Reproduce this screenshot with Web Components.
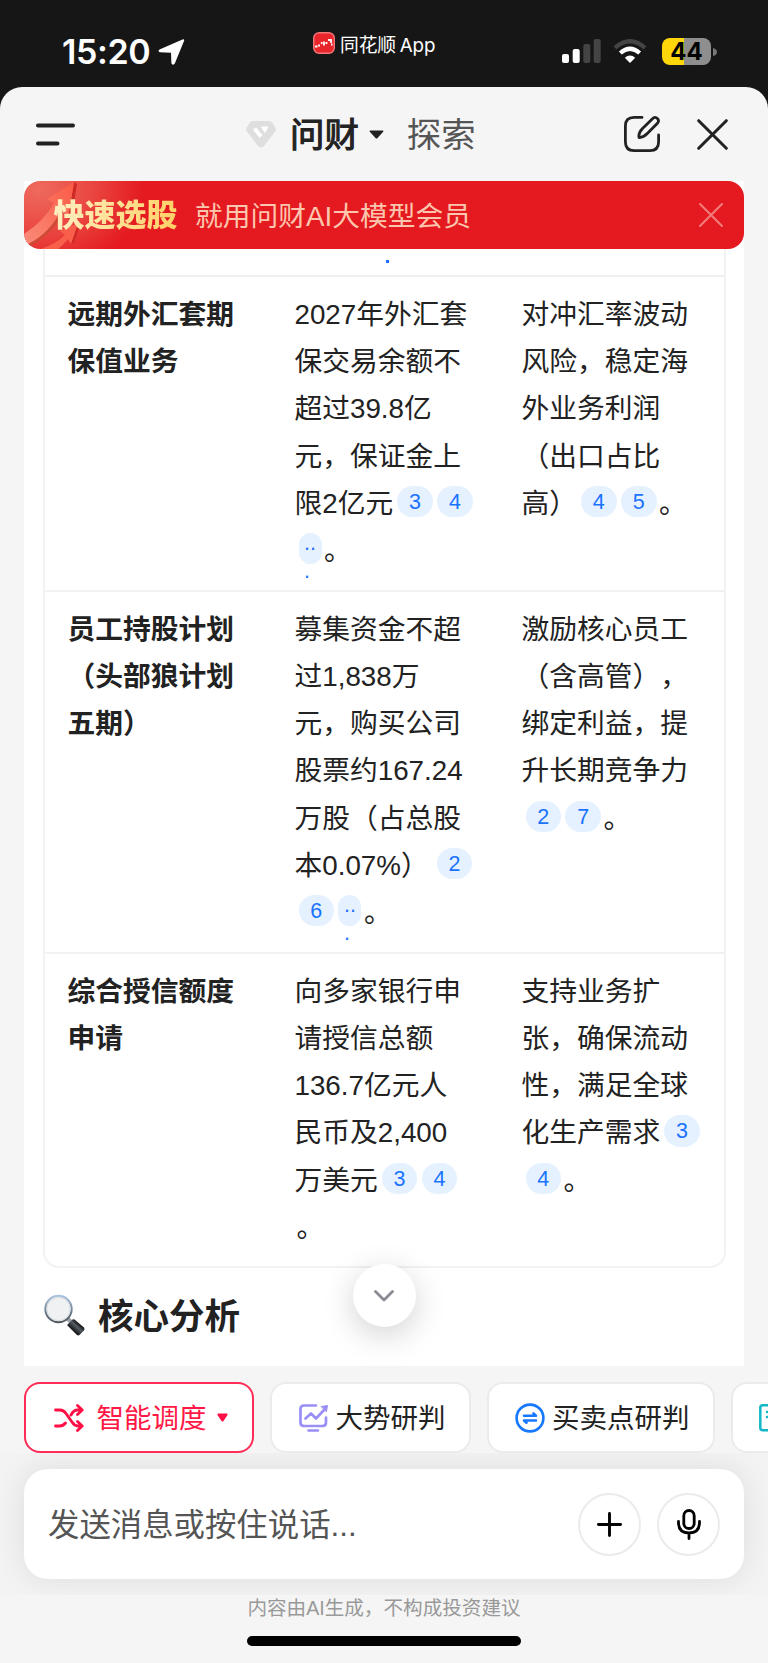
<!DOCTYPE html>
<html lang="zh-CN">
<head>
<meta charset="utf-8">
<meta name="viewport" content="width=device-width">
<title>问财</title>
<style>
    html, body{
        margin: 0;
        padding: 0;
    }
    body{
        width: 768px;
        height: 1663px;
        overflow: hidden;
        background: #161616;
        color: #222;
        font-family: "Liberation Sans", "Noto Sans CJK SC", sans-serif;
        text-spacing-trim: space-all;
    }
</style>
</head>
<body>
<ask-app></ask-app>

<script>
// every component only has to give its markup
class BaseElement extends HTMLElement {
    connectedCallback() {
        if (this.shadowRoot) return
        const tpl = document.createElement('template')
        tpl.innerHTML = `<style>*{ box-sizing: border-box; } svg{ display: block; flex: none; }</style>` + this.render()
        this.attachShadow({ mode: 'open' }).appendChild(tpl.content.cloneNode(true))
    }
}

class StatusBar extends BaseElement {
    render() {
        return `
        <style>
            :host{
                display: flex;
                height: 87px;
                padding: 0 51px 0 62px;
                background: #161616;
                color: #fff;
            }
            .left, .right{ display: flex; align-items: center; height: 103px; width: 251px; }
            .right{ justify-content: flex-end; width: auto; margin-left: auto; }
            .time{ font: 600 34px/40px Inter, sans-serif; letter-spacing: -0.4px; margin-right: 8px; }
            .app{ display: flex; align-items: center; height: 86px; gap: 5px; font-size: 18.8px; white-space: nowrap; }
            .app svg{ margin-top: -1px; }
            .app span{ font-family: Inter, "Noto Sans CJK SC", sans-serif; word-spacing: -1.500px; letter-spacing: -.1px; }
            .battery{
                width: 49px; height: 27px; margin-left: 15px; border-radius: 8px;
                background: linear-gradient(90deg, #ffd60a 44%, #8e8e8e 44%);
                color: #000; text-align: center;
                font: 700 24px/27px Inter, sans-serif;
            }
        </style>
        <div class="left">
            <span class="time">15:20</span>
            <svg width="28" height="28" viewBox="0 0 28 28"><path d="M24.500 1.500Q26.800 .8 26 3L16.800 25.500Q14.600 28 13.400 25.200L13 14.800 2 14.200Q-.6 13.300 1.500 11.400Z" fill="#fff"/></svg>
        </div>
        <div class="app">
            <svg width="22" height="22" viewBox="0 0 22 22">
                <rect x=".7" y=".7" width="20.600" height="20.600" rx="5.500" fill="#e8252b" stroke="#f2777a" stroke-width="1.400"/>
                <path d="M2 14.500h2.500M6 12.500v2M8 10.500l1.500 1M11 9.500v4M13.500 10v2M15 8h3v3M18 12.500h1.500" stroke="#fff" stroke-width="1.800" fill="none"/>
            </svg>
            <span>同花顺 App</span>
        </div>
        <div class="right">
            <svg width="39" height="25" viewBox="0 0 39 25">
                <rect x="0" y="15" width="7" height="9" rx="2" fill="#fff"/><rect x="10.700" y="10" width="7" height="14" rx="2" fill="#fff"/>
                <rect x="21.300" y="5" width="7" height="19" rx="2" fill="#444"/><rect x="31.700" y="0" width="7" height="24" rx="2" fill="#444"/>
            </svg>
            <svg width="34" height="25" viewBox="0 0 34 25" style="margin-left:12px" fill="none" stroke-width="4.200">
                <path d="M2 8.800Q17-4.200 32 8.800" stroke="#444"/>
                <path d="M7.300 14Q17 5.600 26.700 14" stroke="#fff"/>
                <path d="M11.800 18.700Q17 14.300 22.200 18.700L17 24Z" fill="#fff"/>
            </svg>
            <div class="battery">44</div>
            <svg width="4" height="8" viewBox="0 0 4 8" style="margin-left:2px"><path d="M0 0Q4 1 4 4T0 8Z" fill="#777"/></svg>
        </div>
        `
    }
}
customElements.define('status-bar', StatusBar)

class AppHeader extends BaseElement {
    render() {
        return `
        <style>
            :host{
                display: flex;
                align-items: center;
                height: 94px;
                padding: 0 40px 0 36px;
            }
            .tabs{ display: flex; align-items: center; margin-left: 171px; }
            .tab{ font-size: 34.4px; line-height: 50px; padding-top: 1px; }
            .on{ -webkit-text-stroke: 1.100px #222; margin-left: 14px; }
            .off{ color: #555; margin-left: 23px; }
            .end{ margin-left: auto; display: flex; align-items: center; gap: 37px; }
        </style>
        <svg width="39" height="23" viewBox="0 0 39 23"><path d="M2 2.500h35M2 20.500h19.500" stroke="#222" stroke-width="4" stroke-linecap="round"/></svg>
        <div class="tabs">
            <svg width="30" height="27" viewBox="0 0 30 27">
                <path d="M7 0H23Q25 0 26.200 1.600L29.300 6.500Q30.500 8.500 29 10.500L18 25Q15 28 12 25L1 10.500Q-.5 8.500 .7 6.500L3.800 1.600Q5 0 7 0Z" fill="#dedede"/>
                <path d="M8.500 7.500L15 15.500" stroke="#fff" stroke-width="4"/>
                <path d="M15.500 6h6.500l-3.200 5.500Z" fill="#fff" stroke="#fff" stroke-linejoin="round"/>
            </svg>
            <span class="tab on">问财</span>
            <svg width="15" height="9" viewBox="0 0 15 9" style="margin-left:10px"><path d="M1 .5H14Q15 1 14 2L8.500 8Q7.500 9 6.500 8L1 2Q0 1 1 .5Z" fill="#222"/></svg>
            <span class="tab off">探索</span>
        </div>
        <div class="end">
            <svg width="36" height="36" viewBox="0 0 36 36" fill="none" stroke="#222" stroke-width="2.800" stroke-linecap="round" stroke-linejoin="round">
                <path d="M18 1.400H10Q1.400 1.400 1.400 10V26Q1.400 34.600 10 34.600H26Q34.600 34.600 34.600 26V19"/>
                <path d="M15 21.500Q14.200 17 18.500 12.500L28.500 2.800Q31 .2 33.400 2.600T33.200 7.600L23.300 17.600Q19 21.900 15 21.500Z"/>
            </svg>
            <svg width="31" height="31" viewBox="0 0 31 31"><path d="M1.700 1.700L29.300 29.300M29.300 1.700L1.700 29.300" stroke="#222" stroke-width="3" stroke-linecap="round"/></svg>
        </div>
        `
    }
}
customElements.define('app-header', AppHeader)

class PromoBanner extends BaseElement {
    render() {
        return `
        <style>
            :host{
                display: flex;
                align-items: center;
                position: relative;
                flex: none;
                height: 67.500px;
                padding: 0 21px 0 29.500px;
                border-radius: 16px;
                overflow: hidden;
                background: radial-gradient(ellipse 105px 85px at 15px 8px, #ee6a5d, #ea4741 50%, #e41a20 100%);
            }
            .art{ position: absolute; left: 0; top: 0; }
            .title{
                position: relative;
                top: 1px;
                font-size: 31px;
                font-weight: 900;
                line-height: 48px;
                background: linear-gradient(100deg, #fff0c4, #ffcf63);
                -webkit-background-clip: text;
                color: transparent;
            }
            .text{ margin-left: 17.500px; padding-bottom: 2px; font-size: 27.750px; color: #fcc6ae; }
            .close{ margin-left: auto; }
        </style>
        <svg class="art" width="90" height="68" viewBox="0 0 90 68">
            <defs><linearGradient id="g" x1="0" y1="1" x2="1" y2="0"><stop offset="0" stop-color="#f98b79"/><stop offset="1" stop-color="#fb5b46"/></linearGradient></defs>
            <path d="M50 1L53 3 47 41 44 37Z" fill="#cf2a24"/>
            <path d="M4 63Q25 53 38 28L39.500 31Q28 54 6 65Z" fill="#cd4a35"/>
            <path d="M0 53Q20 40 30 22L23 18 50 1 44 37 38 28Q25 53 4 63L0 60Z" fill="url(#g)"/>
            <path d="M54 42L56 44 50 62 47 63Z" fill="#cf2a24"/>
            <path d="M17 68Q32 63 41 54L36 50 54 42 47 63 44 58Q39 64 34 68Z" fill="#f9604c"/>
        </svg>
        <span class="title">快速选股</span>
        <span class="text">就用问财AI大模型会员</span>
        <svg class="close" width="24" height="24" viewBox="0 0 24 24"><path d="M1 1L23 23M23 1L1 23" stroke="#f27d7d" stroke-width="2" stroke-linecap="round"/></svg>
        `
    }
}
customElements.define('promo-banner', PromoBanner)

// citation pill, "more" makes the narrow one whose last dot wraps under it
class RefBadge extends BaseElement {
    render() {
        const more = this.hasAttribute('more')
        return `
        <style>
            :host{
                display: inline-flex;
                justify-content: center;
                vertical-align: top;
                width: ${more ? 23 : 35.6}px;
                height: 31.4px;
                margin: 6px .4px 0 4px;
                border-radius: 16px;
                background: #e6f1ff;
                color: #1a73ff;
                font-size: 21.5px;
                line-height: 33px;
                font-weight: 400;
            }
            .dots{ width: 12px; margin-top: -4px; line-height: 28px; }
        </style>
        ${more ? '<span class="dots">..<br>.</span>' : '<slot></slot>'}
        `
    }
}
customElements.define('ref-badge', RefBadge)

class TableRow extends BaseElement {
    render() {
        return `
        <style>
            :host{
                display: grid;
                grid-template-columns: 227px 227px 227px;
                padding: 14px 0 15.700px;
                border-bottom: 2px solid #f2f2f2;
                font-size: 27.750px;
                line-height: 47.200px;
            }
            :host(:last-of-type){ border-bottom: none; }
            div{ padding-left: 22.500px; }
            .name{ font-weight: 700; }
            ::slotted(p){ margin: 0; height: 47.200px; white-space: nowrap; }
        </style>
        <div class="name"><slot name="name"></slot></div>
        <div><slot name="plan"></slot></div>
        <div><slot name="effect"></slot></div>
        `
    }
}
customElements.define('table-row', TableRow)

class AnswerTable extends BaseElement {
    render() {
        return `
        <style>
            :host{
                display: block;
                flex: none;
                height: 1019px;
                margin: 0 18px 0 19px;
                border: 2px solid #f2f2f2;
                border-top: none;
                border-radius: 0 0 16px 16px;
            }
            .prev{
                height: 28.500px;
                padding: 11px 0 0 341px;
                border-bottom: 2px solid #f0f0f0;
            }
            .prev i{ display: block; width: 3px; height: 3px; background: #1a73ff; }
        </style>
        <div class="prev"><i></i></div>
        <slot></slot>
        `
    }
}
customElements.define('answer-table', AnswerTable)

class SectionTitle extends BaseElement {
    render() {
        return `
        <style>
            :host{
                display: flex;
                align-items: center;
                gap: 13px;
                height: 92px;
                padding-left: 20px;
                font-size: 35.500px;
                font-weight: 700;
            }
            svg{ margin-top: 3px; }
        </style>
        <svg width="41" height="42" viewBox="0 0 41 42">
            <defs>
                <linearGradient id="h" x1="0" y1="1" x2="1" y2="0"><stop offset=".3" stop-color="#111"/><stop offset=".55" stop-color="#555c63"/><stop offset=".7" stop-color="#16181a"/></linearGradient>
                <linearGradient id="r" x1="0" y1="0" x2="0" y2="1"><stop offset="0" stop-color="#a9c4df"/><stop offset="1" stop-color="#4c545c"/></linearGradient>
            </defs>
            <path d="M23 24L28 29" stroke="#9aa3ab" stroke-width="4"/>
            <path d="M23.500 30.500L28.500 25.500Q29.500 25 30.500 25.500L40 33.500Q41 35 40 36.500L35.500 41Q34 42 32.500 40.500L24 32Q23 31.500 23.500 30.500Z" fill="url(#h)"/>
            <circle cx="14.500" cy="15" r="13.200" fill="#f0f1f2" stroke="url(#r)" stroke-width="2"/>
            <circle cx="14.500" cy="15" r="11.600" fill="none" stroke="#d9dde0" stroke-width="1"/>
        </svg>
        <slot></slot>
        `
    }
}
customElements.define('section-title', SectionTitle)

class ToolChip extends BaseElement {
    render() {
        const icons = {
            shuffle: `<svg width="30" height="28" viewBox="0 0 30 28" fill="none" stroke="#ff0f45" stroke-width="2.800" stroke-linecap="round" stroke-linejoin="round">
                <path d="M1.500 6H6Q9.500 6 12 9.500L18 18Q20.500 22 24 22H28M23.500 17.500L28.200 22 23.500 26.500M1.500 22H6Q9 22 11.500 19M17 11Q19.500 6 23.500 6H28M23.500 1.500L28.200 6 23.500 10.500"/></svg>`,
            trend: `<svg width="30" height="28" viewBox="0 0 30 28" fill="none" stroke="#9a8ff5" stroke-width="2.700" stroke-linecap="round" stroke-linejoin="round">
                <path d="M17 1.500H5Q1.500 1.500 1.500 5V18.500Q1.500 22 5 22H23.500Q27 22 27 18.500V13.500M6.500 14.500L12 9.500 17 14.500 25 6M9.500 26.500H19"/>
                <path d="M22.500 2.500L28.500 1.500 27.500 7.500Z" fill="#9a8ff5" stroke-width="1"/></svg>`,
            swap: `<svg width="30" height="30" viewBox="0 0 30 30" fill="none" stroke="#1677ff" stroke-width="2.600" stroke-linecap="round" stroke-linejoin="round">
                <circle cx="15" cy="15" r="13.400"/><path d="M9 12.700H21L18.500 10.500M21 17.500H9L11.500 19.700"/></svg>`,
            doc: `<svg width="28" height="28" viewBox="0 0 28 28" fill="none" stroke="#12b8c8" stroke-width="2.500" stroke-linecap="round">
                <rect x="1.300" y="1.300" width="24" height="25" rx="2.500"/><path d="M8 8H18M8 13H18"/></svg>`
        }
        const active = this.hasAttribute('active')
        return `
        <style>
            :host{
                display: flex;
                align-items: center;
                flex: none;
                width: ${this.getAttribute('width')}px;
                height: 71px;
                padding-left: ${active ? 28 : 26.5}px;
                border: 2px solid ${active ? '#ff2c55' : '#ebebeb'};
                border-radius: 16px;
                background: #fff;
                color: ${active ? '#ff1846' : '#222'};
                font-size: 27.500px;
                white-space: nowrap;
                box-sizing: border-box;
            }
            span{ margin-left: ${active ? 12.5 : 7}px; padding-bottom: 3px; }
            .caret{ margin-left: 10px; }
        </style>
        ${icons[this.getAttribute('icon')]}
        <span><slot></slot></span>
        ${active ? '<svg class="caret" width="11" height="9" viewBox="0 0 11 9"><path d="M1 .5H10Q11 1 10.500 2L6.500 8Q5.500 9 4.500 8L.5 2Q0 1 1 .5Z" fill="#ff0f45"/></svg>' : ''}
        `
    }
}
customElements.define('tool-chip', ToolChip)

class MessageComposer extends BaseElement {
    render() {
        return `
        <style>
            :host{
                display: block;
                height: 142px;
                padding: 16px 24px 0;
                overflow: hidden;
                background: #f3f3f3;
            }
            .box{
                display: flex;
                align-items: center;
                height: 110px;
                padding: 0 24px 0 24px;
                border-radius: 24px;
                background: #fff;
                box-shadow: 0 0 32px rgba(0,0,0,.09);
            }
            .hint{ flex: 1; padding-bottom: 3px; font-size: 31.400px; color: #555; }
            .btn{
                display: flex;
                align-items: center;
                justify-content: center;
                width: 63px;
                height: 63px;
                margin-left: 16px;
                border: 2px solid #ebebeb;
                border-radius: 50%;
            }
        </style>
        <div class="box">
            <span class="hint">发送消息或按住说话...</span>
            <div class="btn"><svg width="25" height="25" viewBox="0 0 26 26"><path d="M13 1.500V24.500M1.500 13H24.500" stroke="#000" stroke-width="3" stroke-linecap="round"/></svg></div>
            <div class="btn"><svg width="24" height="31" viewBox="0 0 24 31" fill="none" stroke="#000" stroke-width="2.800" stroke-linecap="round">
                <rect x="6.800" y="1.500" width="10.400" height="18" rx="5.200"/><path d="M1.500 12.500V13.500Q1.500 24 12 24T22.500 13.500V12.500M12 24V29.500"/></svg></div>
        </div>
        `
    }
}
customElements.define('message-composer', MessageComposer)

class AskApp extends BaseElement {
    render() {
        return `
        <style>
            :host{ display: block; }
            .sheet{
                display: flex;
                flex-direction: column;
                height: 1576px;
                border-radius: 22px 22px 0 0;
                background: #f5f5f5;
                overflow: hidden;
            }
            .answer{
                position: relative;
                display: flex;
                flex-direction: column;
                flex: none;
                height: 1185px;
                margin: 0 24px;
                background: #fff;
            }
            .down{
                position: absolute;
                left: 328.500px;
                bottom: 39px;
                width: 63px;
                height: 63px;
                display: flex;
                align-items: center;
                justify-content: center;
                border-radius: 50%;
                background: #fff;
                box-shadow: 0 8px 32px rgba(0,0,0,.18);
            }
            .chips{
                display: flex;
                gap: 16px;
                padding: 16px 0 0 24px;
                height: 87px;
                overflow: hidden;
            }
            .note{
                height: 26px;
                text-align: center;
                line-height: 26px;
                font-size: 19.600px;
                color: #999;
            }
            .home{
                width: 274px;
                height: 10px;
                margin: 15px auto 0;
                border-radius: 5px;
                background: #000;
            }
            /* full stop that follows a pill or stands alone */
            .stop{ margin-left: 2px; }
        </style>
        <status-bar></status-bar>
        <div class="sheet">
            <app-header></app-header>
            <div class="answer">
                <promo-banner></promo-banner>
                <answer-table>
                    <table-row>
                        <p slot="name">远期外汇套期</p>
                        <p slot="name">保值业务</p>
                        <p slot="plan">2027年外汇套</p>
                        <p slot="plan">保交易余额不</p>
                        <p slot="plan">超过39.8亿</p>
                        <p slot="plan">元，保证金上</p>
                        <p slot="plan">限2亿元<ref-badge>3</ref-badge><ref-badge>4</ref-badge></p>
                        <p slot="plan"><ref-badge more></ref-badge><span class="stop">。</span></p>
                        <p slot="effect">对冲汇率波动</p>
                        <p slot="effect">风险，稳定海</p>
                        <p slot="effect">外业务利润</p>
                        <p slot="effect">（出口占比</p>
                        <p slot="effect">高）<ref-badge>4</ref-badge><ref-badge>5</ref-badge><span class="stop">。</span></p>
                    </table-row>
                    <table-row>
                        <p slot="name">员工持股计划</p>
                        <p slot="name">（头部狼计划</p>
                        <p slot="name">五期）</p>
                        <p slot="plan">募集资金不超</p>
                        <p slot="plan">过1,838万</p>
                        <p slot="plan">元，购买公司</p>
                        <p slot="plan">股票约167.24</p>
                        <p slot="plan">万股（占总股</p>
                        <p slot="plan">本0.07%）<ref-badge style="margin-left:8px">2</ref-badge></p>
                        <p slot="plan"><ref-badge>6</ref-badge><ref-badge more></ref-badge><span class="stop">。</span></p>
                        <p slot="effect">激励核心员工</p>
                        <p slot="effect">（含高管），</p>
                        <p slot="effect">绑定利益，提</p>
                        <p slot="effect">升长期竞争力</p>
                        <p slot="effect"><ref-badge>2</ref-badge><ref-badge>7</ref-badge><span class="stop">。</span></p>
                    </table-row>
                    <table-row>
                        <p slot="name">综合授信额度</p>
                        <p slot="name">申请</p>
                        <p slot="plan">向多家银行申</p>
                        <p slot="plan">请授信总额</p>
                        <p slot="plan">136.7亿元人</p>
                        <p slot="plan">民币及2,400</p>
                        <p slot="plan">万美元<ref-badge>3</ref-badge><ref-badge>4</ref-badge></p>
                        <p slot="plan"><span class="stop">。</span></p>
                        <p slot="effect">支持业务扩</p>
                        <p slot="effect">张，确保流动</p>
                        <p slot="effect">性，满足全球</p>
                        <p slot="effect">化生产需求<ref-badge>3</ref-badge></p>
                        <p slot="effect"><ref-badge>4</ref-badge><span class="stop">。</span></p>
                    </table-row>
                </answer-table>
                <section-title>核心分析</section-title>
                <div class="down"><svg width="20" height="12" viewBox="0 0 20 12"><path d="M1.500 1.500L10 10 18.500 1.500" fill="none" stroke="#8a8a94" stroke-width="2.800" stroke-linecap="round" stroke-linejoin="round"/></svg></div>
            </div>
            <div class="chips">
                <tool-chip icon="shuffle" width="230" active>智能调度</tool-chip>
                <tool-chip icon="trend" width="200.500">大势研判</tool-chip>
                <tool-chip icon="swap" width="228">买卖点研判</tool-chip>
                <tool-chip icon="doc" width="200"></tool-chip>
            </div>
            <message-composer></message-composer>
            <div class="note">内容由AI生成，不构成投资建议</div>
            <div class="home"></div>
        </div>
        `
    }
}
customElements.define('ask-app', AskApp)
</script>
</body>
</html>
